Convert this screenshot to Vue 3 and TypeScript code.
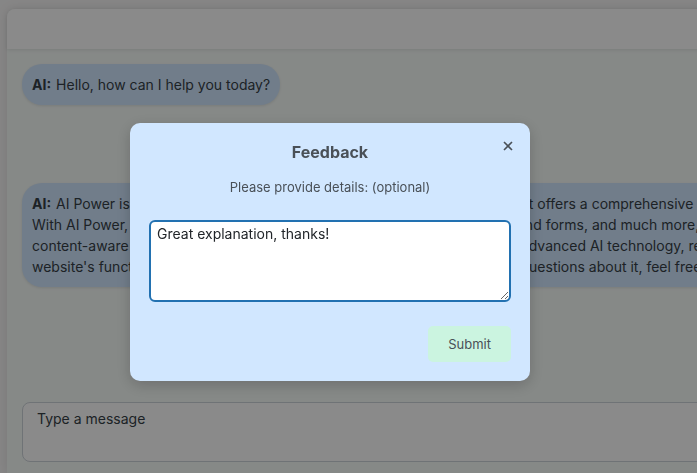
<script setup lang="ts">
import { ref } from 'vue'

const open = ref(true)
const feedback = ref('Great explanation, thanks!')
const message = ref('')
const greeting = 'Hello, how can I help you today?'
const answer: string = [
  'AI Power is an innovative WordPress plugin developed by Senol Sahin. It offers a comprehensive suite of AI tools.',
  'With AI Power, you can generate content, images, advanced AI chatbots, and forms, and much more, all within WordPress.',
  'content-aware chatbots for your business website. It is designed with the advanced AI technology, revolutionizing your',
  "website's functionality and the user experiences. If you have any specific questions about it, feel free to ask.",
].join('\n')
</script>

<template>
  <div class="page">
    <main class="chat">
      <header class="chat-header"></header>
      <div class="messages">
        <p class="bubble"><strong>AI:</strong>{{ greeting }}</p>
        <p class="bubble"><strong>AI:</strong>{{ answer }}</p>
      </div>
      <form class="composer" @submit.prevent>
        <textarea v-model="message" placeholder="Type a message" aria-label="Type a message"></textarea>
      </form>
    </main>
    <div v-if="open" class="overlay">
      <form class="modal" role="dialog" aria-labelledby="feedback-title" @submit.prevent="open = false">
        <button class="close" type="button" aria-label="Close" @click="open = false">
          <svg viewBox="0 0 10 10" width="10" height="10"><path d="M1 1L9 9M9 1L1 9" /></svg>
        </button>
        <h2 id="feedback-title">Feedback</h2>
        <label for="feedback-text">Please provide details: (optional)</label>
        <textarea id="feedback-text" v-model="feedback"></textarea>
        <button class="submit" type="submit">Submit</button>
      </form>
    </div>
  </div>
</template>

<style>
body {
  margin: 0;
  overflow: hidden;
}
</style>

<style scoped>
.page {
  box-sizing: border-box;
  min-height: 100vh;
  padding: 9px 0 0 7px;
  overflow: hidden;
  background: #f8f7f7;
  color: #373f47;
  font-family: Inter, "Liberation Sans", sans-serif;
  font-size: 14px;
  line-height: 21px;
}

.chat {
  margin-right: -48px;
  border-radius: 8px 8px 0 0;
  background: #f8fdfa;
  box-shadow: 0 0 12px rgba(0, 0, 0, 0.1);
}

.chat-header {
  height: 40px;
  border-radius: 8px 8px 0 0;
  background: #fff;
  box-shadow: 0 1px 4px rgba(0, 0, 0, 0.1);
}

.messages {
  display: flex;
  flex-direction: column;
  align-items: flex-start;
  gap: 78px;
  padding: 15px 15px 0;
}

.bubble {
  margin: 0;
  padding: 10px;
  border-radius: 20px;
  background: #d1e7ff;
  box-shadow: 0 1px 3px rgba(0, 0, 0, 0.1);
  white-space: pre;
}

.bubble strong {
  margin-right: 5px;
}

.composer {
  padding: 115px 15px 11px;
}

textarea {
  display: block;
  box-sizing: border-box;
  width: 100%;
  margin: 0;
  background: #fff;
  font: inherit;
}

.composer textarea {
  height: 60px;
  padding: 5px 14px;
  border: 1px solid #ced4da;
  border-radius: 8px;
  resize: none;
}

.composer textarea::placeholder {
  color: #373f47;
  opacity: 1;
}

.overlay {
  position: fixed;
  inset: 0;
  display: flex;
  align-items: flex-start;
  justify-content: center;
  padding: 123px 37px 0 0;
  background: rgba(0, 0, 0, 0.46);
}

.modal {
  position: relative;
  display: flex;
  flex-direction: column;
  box-sizing: border-box;
  width: 400px;
  padding: 19px;
  border-radius: 10px;
  background: #d1e7ff;
  box-shadow: 0 4px 15px rgba(0, 0, 0, 0.2);
  color: #495057;
}

.close {
  position: absolute;
  top: 17px;
  right: 16px;
  padding: 1px;
  border: 0;
  background: none;
  line-height: 0;
}

.close path {
  fill: none;
  stroke: #495057;
  stroke-width: 1.6;
}

h2 {
  margin: 0 0 15px;
  font-size: 16px;
  font-weight: 700;
  line-height: 20px;
  text-align: center;
}

label {
  margin-bottom: 22px;
  font-size: 13px;
  text-align: center;
}

.modal textarea {
  height: 82px;
  padding: 1px 6px;
  border: 2px solid #2271b1;
  border-radius: 6px;
  outline: none;
  color: #212529;
  resize: vertical;
}

.submit {
  align-self: flex-end;
  height: 36px;
  margin-top: 24px;
  padding: 0 20px;
  border: 0;
  border-radius: 5px;
  background: #cbf4e0;
  color: #495057;
  font: inherit;
  font-size: 13px;
}
</style>
